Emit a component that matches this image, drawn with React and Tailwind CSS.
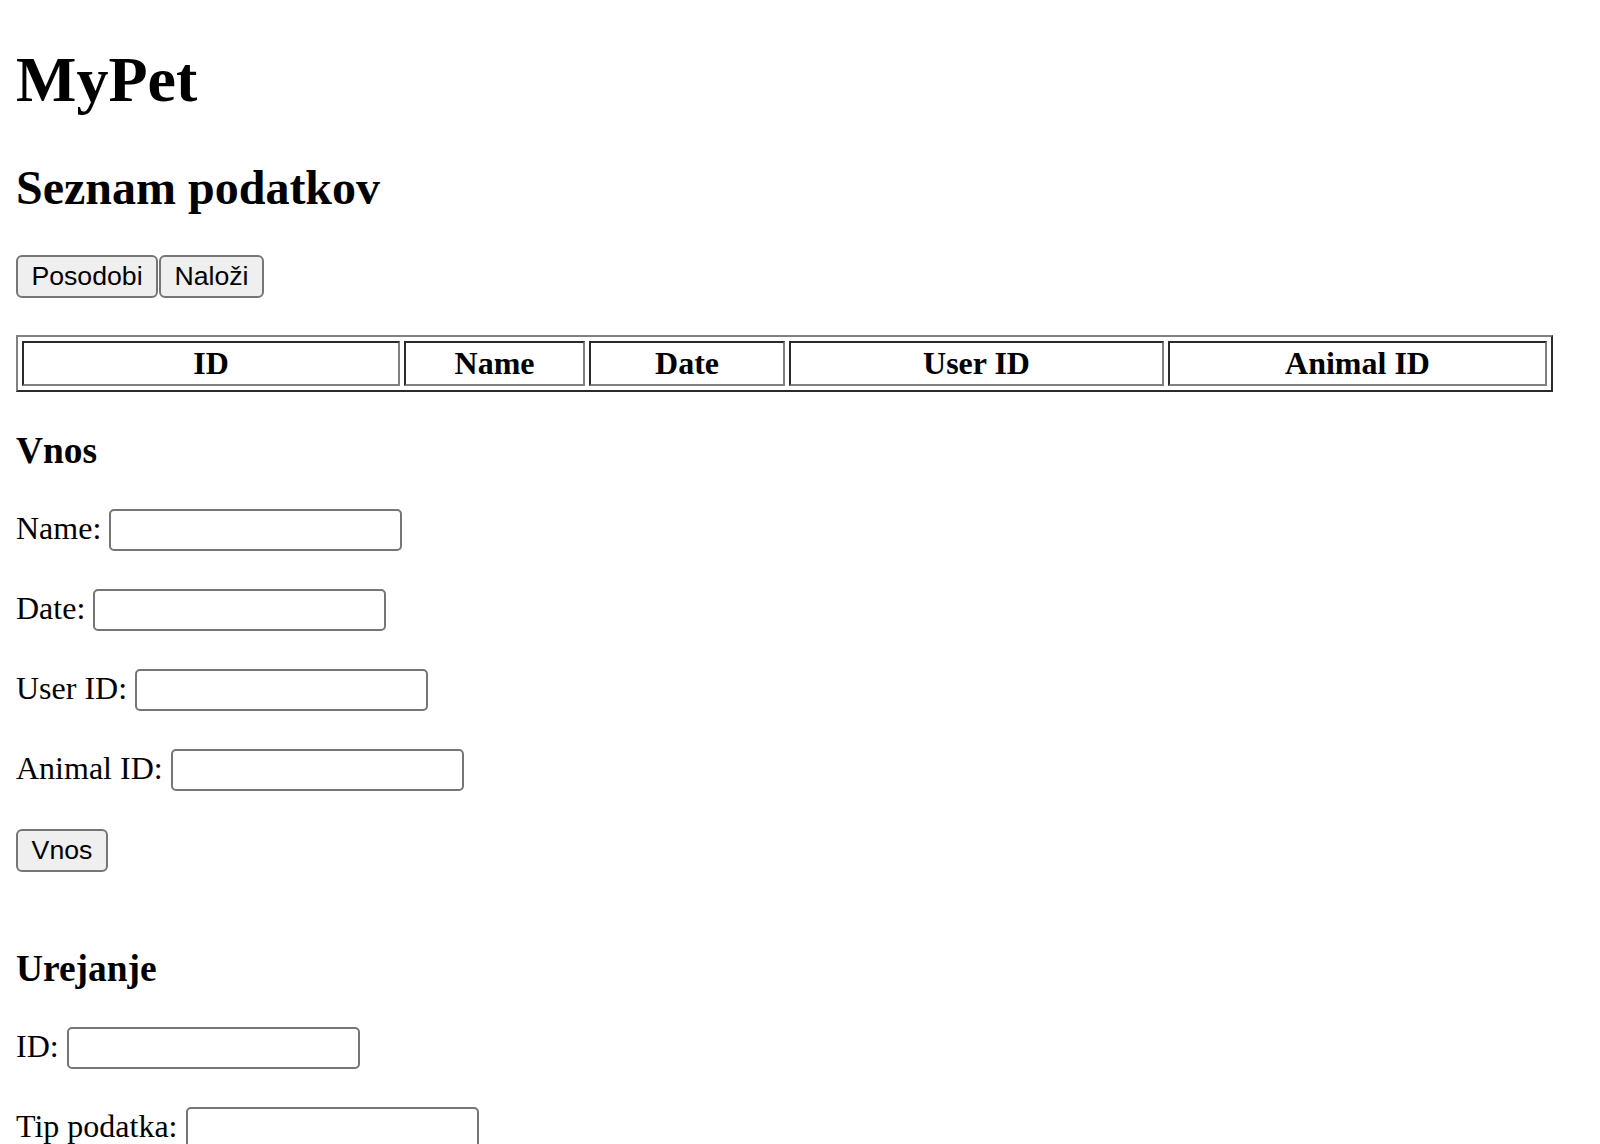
import { useState } from 'react';

const columns = [
  { label: 'ID', width: 'w-[378px]' },
  { label: 'Name', width: 'w-[181px]' },
  { label: 'Date', width: 'w-[196px]' },
  { label: 'User ID', width: 'w-[375px]' },
  { label: 'Animal ID', width: 'w-[379px]' },
];

const inputClass =
  "w-[293px] h-[42px] border-2 border-[#767676] rounded-[5px] px-[4px] py-[2px] bg-white font-['Liberation_Sans'] text-[26.67px] leading-[normal] align-baseline";

const buttonClass =
  "h-[43px] border-2 border-[#767676] rounded-[6px] bg-[#efefef] text-black font-['Liberation_Sans'] text-[26.67px] leading-[normal] flex items-center justify-center";

function Field({ label, value, onChange }) {
  return (
    <div className="my-[32px] h-[48px]">
      {label}{' '}
      <input className={inputClass} value={value} onChange={(e) => onChange(e.target.value)} />
    </div>
  );
}

function App() {
  const [entry, setEntry] = useState({ name: '', date: '', userId: '', animalId: '' });
  const [edit, setEdit] = useState({ id: '', type: '' });

  const set = (key) => (val) => setEntry({ ...entry, [key]: val });
  const setE = (key) => (val) => setEdit({ ...edit, [key]: val });

  return (
    <div className="font-['Liberation_Serif'] leading-[normal] text-[32px] text-black bg-white px-[16px] pb-[16px] min-h-screen">
      <h1 className="text-[64px] font-bold mt-[43px] mb-[43px]">MyPet</h1>
      <h2 className="text-[48px] font-bold mb-[40px]">Seznam podatkov</h2>

      <div className="flex gap-[1px] h-[43px]">
        <button className={`${buttonClass} w-[142px]`}>Posodobi</button>
        <button className={`${buttonClass} w-[105px]`}>Naloži</button>
      </div>

      <table className="mt-[37px] w-[1537px] table-fixed border-separate border-spacing-[4px] border-2 border-t-[#808080] border-l-[#808080] border-r-[#2b2b2b] border-b-[#2b2b2b]">
        <thead>
          <tr>
            {columns.map((c) => (
              <th
                key={c.label}
                className={`${c.width} p-[2px] border-2 border-t-[#2b2b2b] border-l-[#2b2b2b] border-r-[#808080] border-b-[#808080] text-center font-bold text-[32px]`}
              >
                {c.label}
              </th>
            ))}
          </tr>
        </thead>
        <tbody></tbody>
      </table>

      <h3 className="text-[37.44px] font-bold mt-[37px] mb-[37px]">Vnos</h3>
      <Field label="Name:" value={entry.name} onChange={set('name')} />
      <Field label="Date:" value={entry.date} onChange={set('date')} />
      <Field label="User ID:" value={entry.userId} onChange={set('userId')} />
      <Field label="Animal ID:" value={entry.animalId} onChange={set('animalId')} />
      <div className="flex h-[43px] mt-[32px]">
        <button className={`${buttonClass} w-[92px]`}>Vnos</button>
      </div>

      <h3 className="text-[37.44px] font-bold mt-[75px] mb-[37px]">Urejanje</h3>
      <Field label="ID:" value={edit.id} onChange={setE('id')} />
      <Field label="Tip podatka:" value={edit.type} onChange={setE('type')} />
    </div>
  );
}

export default App;
